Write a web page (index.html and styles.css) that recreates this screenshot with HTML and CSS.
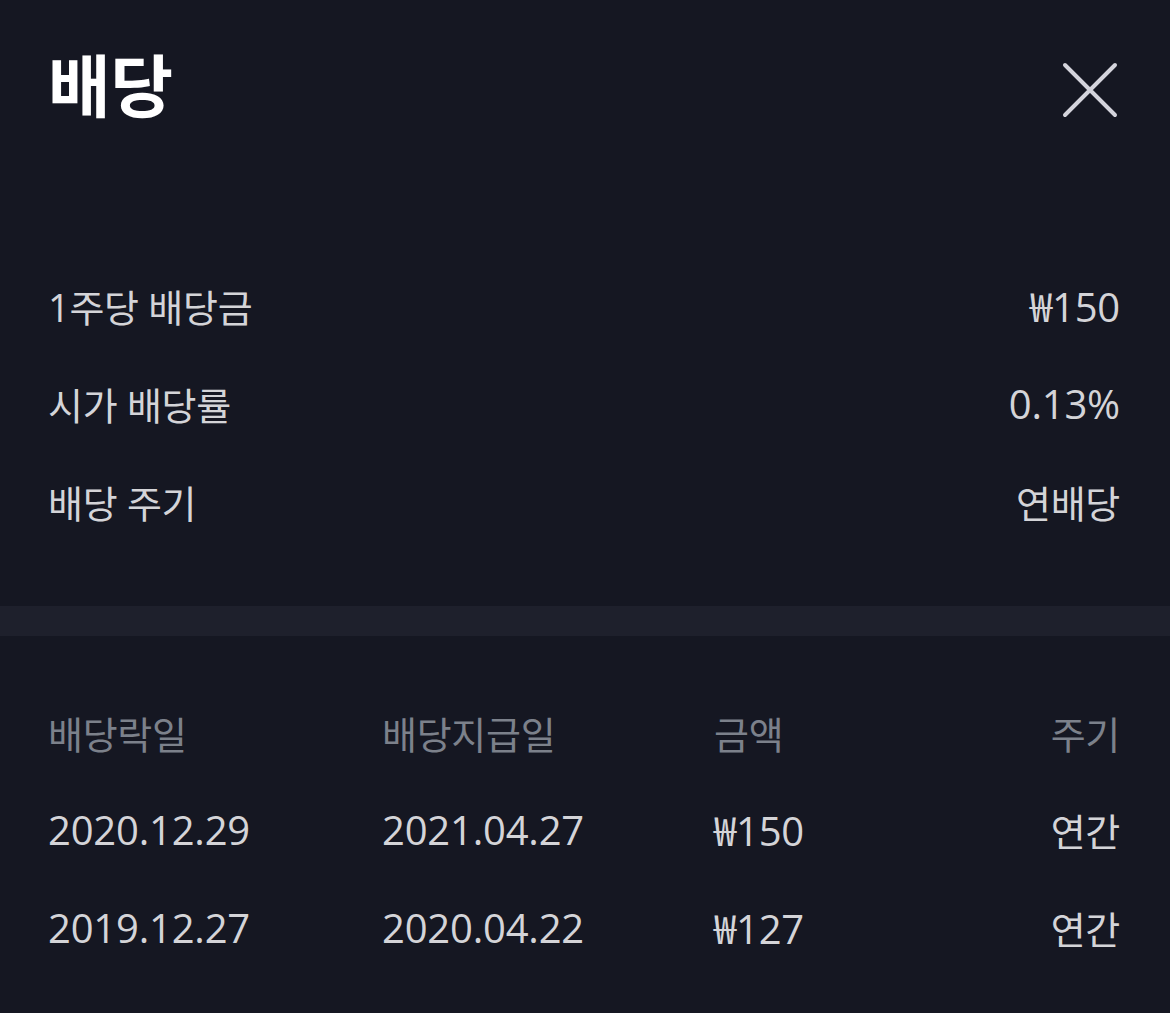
FILE: index.html
```html
<!DOCTYPE html>
<html lang="ko">
<head>
<meta charset="utf-8">
<link rel="stylesheet" href="styles.css">
</head>
<body>
<div class="sheet">
  <header class="header">
    <h1 class="title">배당</h1>
    <button class="close" aria-label="닫기">
      <svg width="56" height="56" viewBox="0 0 56 56"><path d="M3 3 L53 53 M53 3 L3 53" stroke="#d4d4dc" stroke-width="4" stroke-linecap="round" fill="none"/></svg>
    </button>
  </header>
  <section class="summary">
    <div class="row"><span>1주당 배당금</span><span class="num">₩150</span></div>
    <div class="row"><span>시가 배당률</span><span class="num">0.13%</span></div>
    <div class="row"><span>배당 주기</span><span>연배당</span></div>
  </section>
  <div class="divider"></div>
  <section class="table">
    <div class="trow thead"><span>배당락일</span><span>배당지급일</span><span>금액</span><span class="r">주기</span></div>
    <div class="trow"><span class="num">2020.12.29</span><span class="num">2021.04.27</span><span class="num">₩150</span><span class="r">연간</span></div>
    <div class="trow"><span class="num">2019.12.27</span><span class="num">2020.04.22</span><span class="num">₩127</span><span class="r">연간</span></div>
  </section>
</div>
</body>
</html>
```
FILE: styles.css
```css
html, body {
  margin: 0;
  padding: 0;
  background: #151722;
}
body {
  font-family: "Open Sans", "Noto Sans CJK KR", sans-serif;
  color: #d4d4d8;
}
.sheet {
  width: 1170px;
  height: 1013px;
  overflow: hidden;
}
.header {
  display: flex;
  justify-content: space-between;
  align-items: center;
  height: 166px;
  padding: 0 52px 0 48px;
  box-sizing: border-box;
}
.title {
  margin: 0;
  font-family: "Noto Sans CJK KR", sans-serif;
  font-size: 68px;
  font-weight: 700;
  color: #ffffff;
  line-height: 1;
  letter-spacing: 0;
}
.close {
  background: none;
  border: 0;
  padding: 0;
  width: 56px;
  height: 56px;
  display: block;
  margin-top: 14px;
}
.close svg { display: block; }
.summary {
  padding: 90px 50px 56px 48px;
}
.row {
  display: flex;
  justify-content: space-between;
  align-items: center;
  height: 98px;
  font-size: 38px;
  letter-spacing: -0.3px;
}
.num {
  font-size: 40px;
  letter-spacing: -0.2px;
}
.divider {
  height: 30px;
  background: #1e202c;
}
.table {
  padding: 49px 50px 0 48px;
}
.trow {
  display: grid;
  grid-template-columns: 334px 332px 1fr auto;
  align-items: center;
  height: 98px;
  font-size: 38px;
  letter-spacing: -0.3px;
}
.thead {
  color: #7c818b;
  height: 95px;
}
.r { text-align: right; }
```
